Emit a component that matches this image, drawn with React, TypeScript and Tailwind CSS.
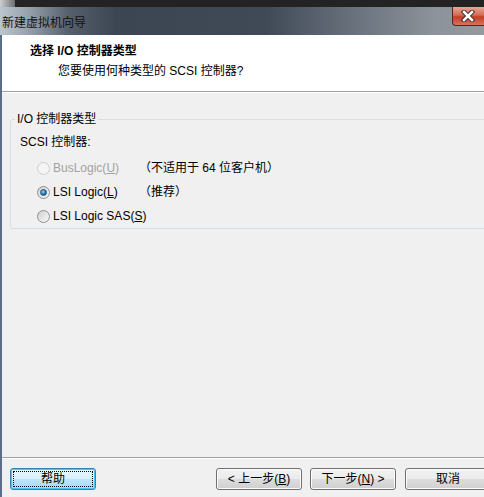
import React from "react";

const font = "font-['Liberation_Sans','Noto_Sans_CJK_SC',sans-serif]";

function Radio({ state }: { state: "disabled" | "checked" | "off" }) {
    if (state === "disabled") {
        return (
            <span className="w-[13px] h-[13px] rounded-full border border-[#cfcfcf] bg-[#f4f4f4] shrink-0" />
        );
    }
    return (
        <span className="w-[13px] h-[13px] rounded-full border border-[#8e8f8f] bg-[linear-gradient(135deg,#cfd0d1,#f9f9f9)] flex items-center justify-center shrink-0">
            {state === "checked" && (
                <span className="w-[7px] h-[7px] rounded-full bg-[radial-gradient(circle_at_40%_35%,#9ad3f5,#1d6fb3_60%,#124d86)] border border-[#25507a]" />
            )}
        </span>
    );
}

function Btn({ children, focused }: { children: React.ReactNode; focused?: boolean }) {
    if (focused) {
        return (
            <div className="h-[22px] rounded-[3px] border border-[#3c7fb1] bg-[linear-gradient(#eaf6fd_0%,#d9f0fc_50%,#bee6fd_51%,#a7d9f5_100%)] p-[2px] shadow-[inset_0_0_0_1px_#48c7f4]">
                <div className="h-full border border-dotted border-black flex items-center justify-center text-[12px] text-black">
                    {children}
                </div>
            </div>
        );
    }
    return (
        <div className="h-[22px] rounded-[3px] border border-[#707070] bg-[linear-gradient(#f2f2f2_0%,#ebebeb_50%,#dddddd_51%,#cfcfcf_100%)] shadow-[inset_0_0_0_1px_#fcfcfc] flex items-center justify-center text-[12px] text-black">
            {children}
        </div>
    );
}

export default function App() {
    return (
        <div className={`w-[484px] h-[497px] overflow-hidden flex flex-col bg-[#f0f0f0] ${font}`}>
            {/* window top edge */}
            <div className="h-[7px] flex bg-[#232323]">
                <div className="w-[15px] bg-[linear-gradient(90deg,#cdd0d3,#6b6e71)]" />
            </div>

            {/* title bar */}
            <div className="h-[28px] flex items-center justify-between bg-[linear-gradient(90deg,#bcc6ce_0%,#95a0ab_6%,#56616d_14%,#3c4653_24%,#404a57_55%,#6d7580_75%,#8d939a_90%,#959aa0_100%)]">
                <span className="pl-[2px] pt-[4px] text-[12px] text-[#111]">新建虚拟机向导</span>
                <div className="self-start w-[32px] h-[19px] rounded-bl-[4px] border border-[#4a2a24] border-t-0 border-r-0 bg-[linear-gradient(#e8a898_0%,#d46c55_45%,#c33e25_55%,#d9745a_100%)] flex items-center justify-start pl-[7px]">
                    <svg width="16" height="12" viewBox="0 0 16 12">
                        <path d="M4 2 L12 10 M12 2 L4 10" stroke="#3a2a2a" strokeWidth="4.5" strokeLinecap="square" />
                        <path d="M4 2 L12 10 M12 2 L4 10" stroke="#ffffff" strokeWidth="2.6" strokeLinecap="square" />
                    </svg>
                </div>
            </div>

            <div className="flex-1 flex flex-col border-l-2 border-[#5b6e88]">
                {/* header */}
                <div className="h-[57px] bg-white border-b border-[#a0a0a0] flex flex-col pt-[7px]">
                    <div className="pl-[28px] text-[12px] font-bold text-black leading-[18px]">选择 I/O 控制器类型</div>
                    <div className="pl-[56px] text-[12px] text-black leading-[18px] mt-[2px]">您要使用何种类型的 SCSI 控制器?</div>
                </div>

                {/* body */}
                <div className="flex-1 border-t border-white pt-[19px] pl-[8px]">
                    <fieldset className="w-[490px] h-[117px] border border-[#d5dfe5] rounded-[3px] px-[9px]">
                        <legend className="-ml-[5px] px-[2px] text-[12px] text-black leading-[14px]">I/O 控制器类型</legend>
                        <div className="text-[12px] text-black leading-[16px] mt-[8px]">SCSI 控制器:</div>
                        <div className="flex flex-col gap-[8px] mt-[10px] pl-[17px] text-[12px] leading-[16px]">
                            <div className="flex items-center">
                                <Radio state="disabled" />
                                <span className="ml-[3px] w-[86px] text-[#a2a2a2]">
                                    BusLogic(<span className="underline">U</span>)
                                </span>
                                <span className="text-black">（不适用于 64 位客户机）</span>
                            </div>
                            <div className="flex items-center">
                                <Radio state="checked" />
                                <span className="ml-[3px] w-[86px] text-black">
                                    LSI Logic(<span className="underline">L</span>)
                                </span>
                                <span className="text-black">（推荐）</span>
                            </div>
                            <div className="flex items-center">
                                <Radio state="off" />
                                <span className="ml-[3px] text-black">
                                    LSI Logic SAS(<span className="underline">S</span>)
                                </span>
                            </div>
                        </div>
                    </fieldset>
                </div>

                {/* footer */}
                <div className="h-[40px] border-t border-[#a0a0a0] shadow-[inset_0_1px_0_#ffffff] flex items-start pt-[10px] pl-[8px]">
                    <div className="w-[86px] shrink-0">
                        <Btn focused>帮助</Btn>
                    </div>
                    <div className="w-[86px] ml-[120px] shrink-0">
                        <Btn>
                            &lt; 上一步(<span className="underline">B</span>)
                        </Btn>
                    </div>
                    <div className="w-[86px] ml-[8px] shrink-0">
                        <Btn>
                            下一步(<span className="underline">N</span>) &gt;
                        </Btn>
                    </div>
                    <div className="w-[86px] ml-[9px] shrink-0">
                        <Btn>取消</Btn>
                    </div>
                </div>
            </div>
        </div>
    );
}
